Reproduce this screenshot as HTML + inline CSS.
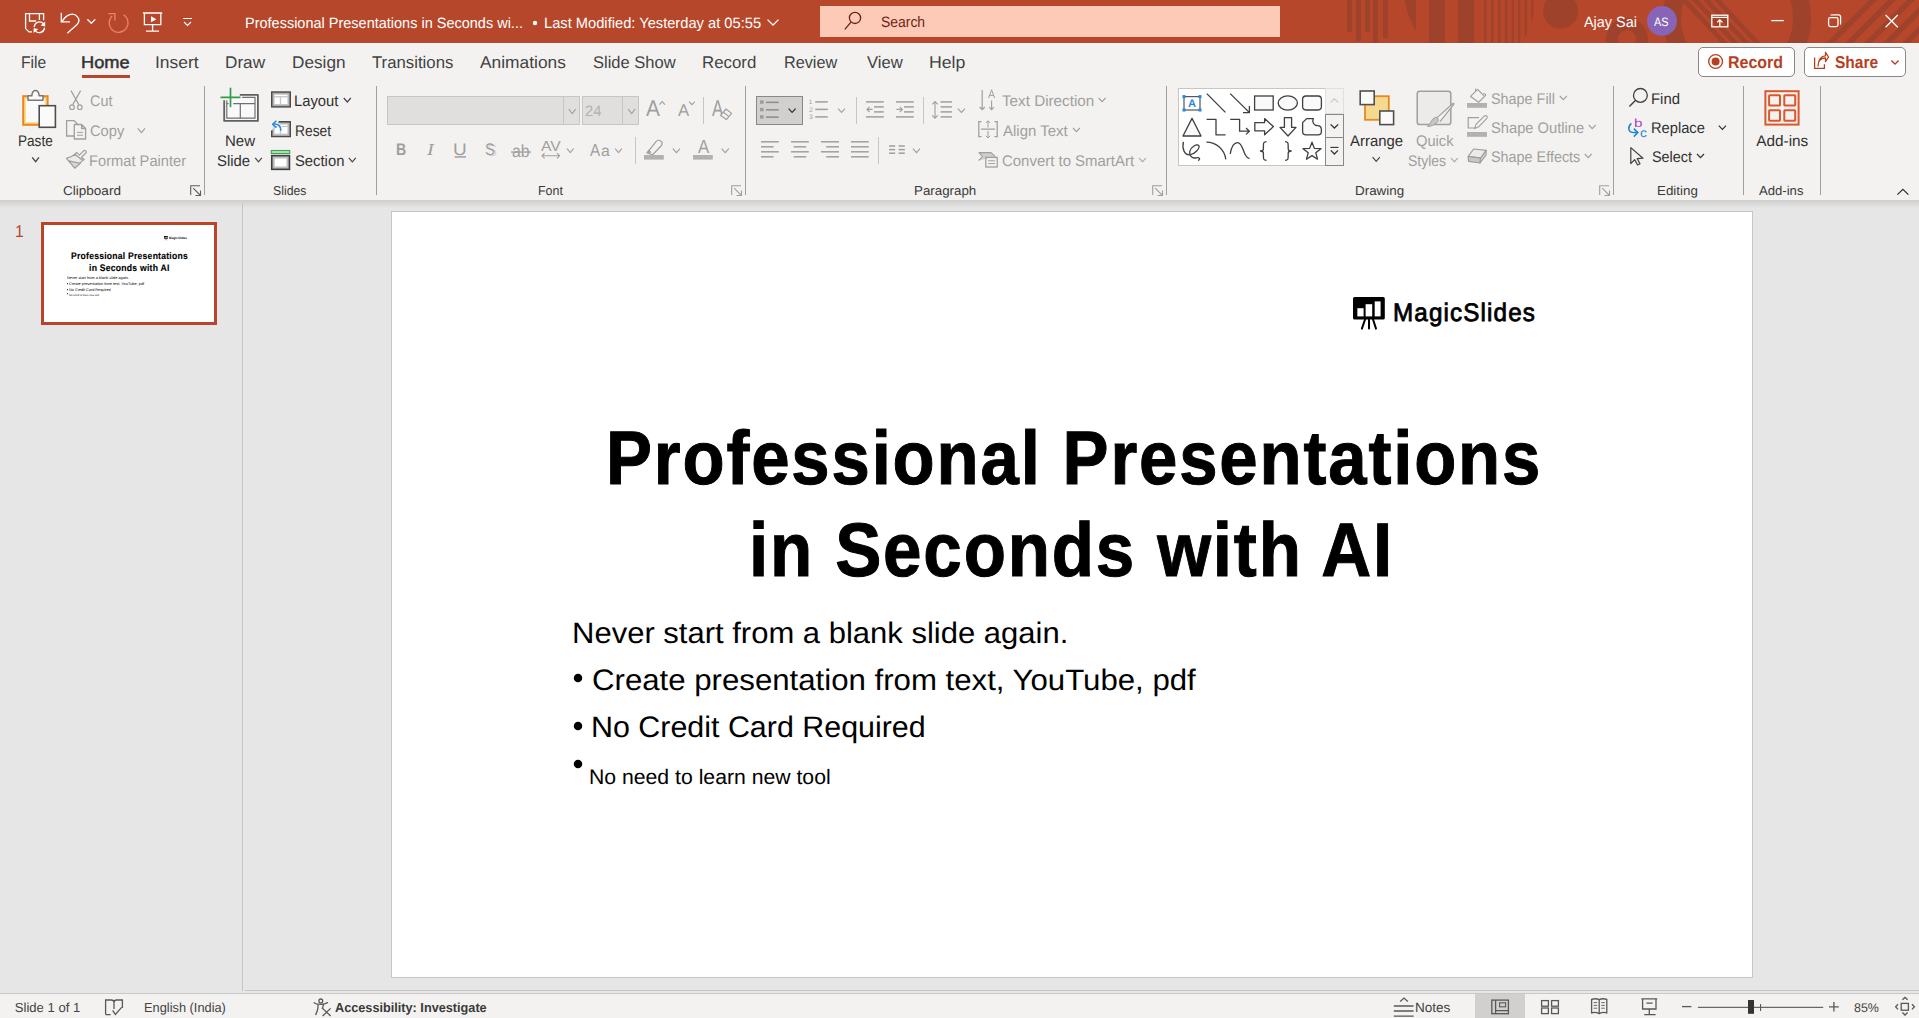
<!DOCTYPE html>
<html><head><meta charset="utf-8"><title>PowerPoint</title>
<style>
html,body{margin:0;padding:0;width:1919px;height:1018px;overflow:hidden;background:#E6E6E6;}
body{position:relative;font-family:"Liberation Sans",sans-serif;}
.r{position:absolute;box-sizing:border-box;}
.s{position:absolute;overflow:visible;}
.t{position:absolute;white-space:nowrap;line-height:1;transform-origin:0 0;text-rendering:geometricPrecision;font-family:"Liberation Sans",sans-serif;}
</style></head><body>
<div class="r" style="left:0px;top:0px;width:1919px;height:43px;background:#B7472A"></div>
<div class="r" style="left:0px;top:43px;width:1919px;height:1px;background:#F8F7F6"></div>
<div class="r" style="left:0px;top:44px;width:1919px;height:156px;background:#F3F2F1"></div>
<div class="r" style="left:0px;top:200px;width:1919px;height:794px;background:#E6E6E6"></div>
<div class="r" style="left:0px;top:200px;width:1919px;height:8px;background:linear-gradient(#CFCECD,#E6E6E6)"></div>
<div class="r" style="left:0px;top:994px;width:1919px;height:24px;background:#F3F2F1"></div>
<svg class="s" style="left:0px;top:0px;overflow:hidden" width="1919" height="43" viewBox="0 0 1919 43"><rect x="1347" y="0" width="5" height="32" fill="#9E422C"/><rect x="1356" y="0" width="5" height="41" fill="#9E422C"/><rect x="1365" y="0" width="5" height="32" fill="#9E422C"/><rect x="1373" y="0" width="5" height="43" fill="#9E422C"/><rect x="1383" y="0" width="5" height="38" fill="#9E422C"/><rect x="1429" y="0" width="16" height="43" fill="#9E422C"/><rect x="1458" y="0" width="16" height="43" fill="#9E422C"/><path d="M1405 0 H1416 V31 Q1407 16 1405 0 Z" fill="#9E422C"/><clipPath id="cp1"><circle cx="1470" cy="5" r="64"/></clipPath><g clip-path="url(#cp1)"><rect x="1484" y="0" width="2.5" height="43" fill="#9E422C"/><rect x="1491" y="0" width="2.5" height="43" fill="#9E422C"/><rect x="1498" y="0" width="2.5" height="43" fill="#9E422C"/><rect x="1505" y="0" width="2.5" height="43" fill="#9E422C"/><rect x="1511.5" y="0" width="2.5" height="43" fill="#9E422C"/><rect x="1518" y="0" width="2.5" height="43" fill="#9E422C"/><rect x="1524.5" y="0" width="2.5" height="43" fill="#9E422C"/><rect x="1531" y="0" width="2.5" height="43" fill="#9E422C"/></g><circle cx="1560.5" cy="11" r="17.5" fill="#9E422C"/><circle cx="1627" cy="39" r="15" fill="none" stroke="#9E422C" stroke-width="12"/><circle cx="1737" cy="18" r="65" fill="none" stroke="#9E422C" stroke-width="18"/><clipPath id="cp2"><circle cx="1737" cy="18" r="56"/></clipPath><g clip-path="url(#cp2)"><path d="M1681 0 L1687.5 0 L1727.5 43 L1721 43 Z" fill="#9E422C"/><path d="M1692 0 L1698.5 0 L1738.5 43 L1732 43 Z" fill="#9E422C"/><path d="M1703 0 L1709.5 0 L1749.5 43 L1743 43 Z" fill="#9E422C"/><path d="M1714 0 L1720.5 0 L1760.5 43 L1754 43 Z" fill="#9E422C"/></g><g><path d="M1826 43 L1834 43 L1877 0 L1869 0 Z" fill="#9E422C"/><path d="M1845 43 L1853 43 L1896 0 L1888 0 Z" fill="#9E422C"/><path d="M1864 43 L1872 43 L1915 0 L1907 0 Z" fill="#9E422C"/><path d="M1883 43 L1891 43 L1934 0 L1926 0 Z" fill="#9E422C"/><path d="M1902 43 L1910 43 L1953 0 L1945 0 Z" fill="#9E422C"/></g></svg>
<svg class="s" style="left:0px;top:0px;" width="200" height="43" viewBox="0 0 200 43"><path d="M31.4 31.9 H29 L25.6 28.6 V13.6 H43.6 V19.6" fill="none" stroke="#fff" stroke-width="1.3" stroke-linecap="square"/><path d="M29.5 13.6 V21 H35.5 M39.4 13.6 V19.4" fill="none" stroke="#fff" stroke-width="1.3" stroke-linecap="square"/><path d="M34.3 26.4 A5.2 5.2 0 0 1 43.6 23.9" fill="none" stroke="#fff" stroke-width="1.3" stroke-linecap="square"/><path d="M45.2 21.4 L45.2 26.4 L40.6 25.6 Z" fill="#fff"/><path d="M44.5 28.2 A5.2 5.2 0 0 1 35.2 30.6" fill="none" stroke="#fff" stroke-width="1.3" stroke-linecap="square"/><path d="M33.6 33 L33.6 28.2 L38.2 29 Z" fill="#fff"/><path d="M61.3 13.5 V21.9 H69.4" fill="none" stroke="#fff" stroke-width="1.3" stroke-linecap="square"/><path d="M62.3 21.2 C66 14.2 73.5 12 77.3 16.6 C79.6 19.4 79 22.5 76.8 24.8 L67.8 32.8" fill="none" stroke="#fff" stroke-width="1.3" stroke-linecap="square"/><path d="M87.8 19.8 L91.3 23.3 L94.8 19.8" fill="none" stroke="#fff" stroke-width="1.3" stroke-linecap="square"/><path d="M112.2 16 A9.4 9.4 0 1 0 123.4 14.8" fill="none" stroke="#E8806A" stroke-width="1.3"/><path d="M108.2 13.6 H114.9 V20.6" fill="none" stroke="#E8806A" stroke-width="1.4"/><path d="M143.6 13 H161.6 M144.4 13 V24.6 H160.8 V13 M152.6 24.6 V31 M146.6 31.2 H158.4" fill="none" stroke="#fff" stroke-width="1.3" stroke-linecap="square"/><path d="M151 16.2 L156.4 19.2 L151 22.2 Z" fill="#fff"/><path d="M183.2 18.5 H192 M184 22 L187.5 25.4 L191 22" fill="none" stroke="#fff" stroke-width="1.1"/></svg>
<span class="t" style="left:245.34px;top:16.80px;font-size:14.94px;color:#FFFFFF;transform:scaleX(0.9703);">Professional Presentations in Seconds wi...</span>
<svg class="s" style="left:530px;top:18px;" width="10" height="10" viewBox="0 0 10 10"><circle cx="5" cy="5" r="2.2" fill="#fff"/></svg>
<span class="t" style="left:543.72px;top:16.80px;font-size:14.94px;color:#FFFFFF;transform:scaleX(0.9826);">Last Modified: Yesterday at 05:55</span>
<svg class="s" style="left:760px;top:10px;" width="25" height="25" viewBox="0 0 25 25"><path d="M7.5 9.6 L13 15 L18.5 9.6" fill="none" stroke="#fff" stroke-width="1.3"/></svg>
<div class="r" style="left:820px;top:6px;width:460px;height:31px;background:#FCCAB6"></div>
<svg class="s" style="left:840px;top:8px;" width="30" height="30" viewBox="0 0 30 30"><circle cx="15" cy="9.9" r="5.6" fill="none" stroke="#6E1F14" stroke-width="1.3"/><path d="M11 14.2 L4.8 21.4" stroke="#6E1F14" stroke-width="1.3"/></svg>
<span class="t" style="left:880.95px;top:14.80px;font-size:15.08px;color:#6E1F14;transform:scaleX(0.9226);">Search</span>
<span class="t" style="left:1583.50px;top:15.80px;font-size:14.94px;color:#FFFFFF;transform:scaleX(0.9653);">Ajay Sai</span>
<svg class="s" style="left:1647px;top:6px;" width="30" height="30" viewBox="0 0 30 30"><circle cx="15" cy="15" r="15" fill="#8764B8"/></svg>
<span class="t" style="left:1654.20px;top:15.80px;font-size:12.23px;color:#FFFFFF;transform:scaleX(0.8947);">AS</span>
<svg class="s" style="left:1700px;top:0px;" width="219" height="43" viewBox="0 0 219 43"><rect x="11.8" y="15.2" width="16" height="11.6" fill="none" stroke="#fff" stroke-width="1.3"/><path d="M11.8 17.4 H27.8" stroke="#fff" stroke-width="1.2"/><path d="M19.8 26 V20 M17.2 22.4 L19.8 19.8 L22.4 22.4" fill="none" stroke="#fff" stroke-width="1.3"/><path d="M71.3 20.6 H83.8" stroke="#fff" stroke-width="1.3"/><rect x="128.6" y="17.6" width="9.4" height="9" rx="1.8" fill="none" stroke="#fff" stroke-width="1.3"/><path d="M130.8 15.6 V15.4 Q130.8 14.8 132.8 14.8 H138.6 Q140.6 14.8 140.6 16.8 V22.6 Q140.6 24.4 140 24.4" fill="none" stroke="#fff" stroke-width="1.3"/><path d="M185.6 15 L197.8 27.2 M197.8 15 L185.6 27.2" stroke="#fff" stroke-width="1.3"/></svg>
<span class="t" style="left:20.70px;top:55.10px;font-size:16.93px;color:#424242;transform:scaleX(0.9263);">File</span>
<span class="t" style="left:81.10px;top:55.10px;font-size:16.93px;color:#303030;transform:scaleX(1.0779);-webkit-text-stroke:0.45px #303030;">Home</span>
<span class="t" style="left:154.65px;top:55.10px;font-size:16.93px;color:#424242;transform:scaleX(1.0312);">Insert</span>
<span class="t" style="left:224.88px;top:55.10px;font-size:16.93px;color:#424242;transform:scaleX(1.0137);">Draw</span>
<span class="t" style="left:291.68px;top:55.10px;font-size:16.93px;color:#424242;transform:scaleX(1.0164);">Design</span>
<span class="t" style="left:371.70px;top:55.10px;font-size:16.93px;color:#424242;transform:scaleX(0.9903);">Transitions</span>
<span class="t" style="left:480.30px;top:55.10px;font-size:16.93px;color:#424242;transform:scaleX(1.0268);">Animations</span>
<span class="t" style="left:592.62px;top:55.10px;font-size:16.93px;color:#424242;transform:scaleX(0.9767);">Slide Show</span>
<span class="t" style="left:702.11px;top:55.10px;font-size:16.93px;color:#424242;transform:scaleX(0.9952);">Record</span>
<span class="t" style="left:783.95px;top:55.10px;font-size:16.93px;color:#424242;transform:scaleX(0.9581);">Review</span>
<span class="t" style="left:866.50px;top:55.10px;font-size:16.93px;color:#424242;transform:scaleX(0.9819);">View</span>
<span class="t" style="left:928.84px;top:55.10px;font-size:16.93px;color:#424242;transform:scaleX(1.0457);">Help</span>
<div class="r" style="left:82px;top:75px;width:48px;height:3px;background:#B7472A"></div>
<div class="r" style="left:1698px;top:47px;width:97px;height:30px;background:#fff;border:1px solid #8A8886;border-radius:5px"></div>
<div class="r" style="left:1804px;top:47px;width:102px;height:30px;background:#fff;border:1px solid #8A8886;border-radius:5px"></div>
<svg class="s" style="left:1700px;top:45px;" width="30" height="30" viewBox="0 0 30 30"><circle cx="15.6" cy="16.5" r="6.9" fill="none" stroke="#B5401F" stroke-width="1.4"/><circle cx="15.6" cy="16.5" r="4" fill="#B5401F"/></svg>
<span class="t" style="left:1727.77px;top:53.80px;font-size:17.07px;font-weight:bold;color:#B5401F;transform:scaleX(0.9368);">Record</span>
<svg class="s" style="left:1810px;top:45px;" width="30" height="30" viewBox="0 0 30 30"><path d="M4.6 12.6 V23.4 H14.4 V19.2" fill="none" stroke="#B5401F" stroke-width="1.3"/><path d="M8 21 C8 15.5 11.5 13 15.5 13 V16.6 L18.6 12 L15.5 7.4 V10.8 C11 10.8 8.6 14 8 21 Z" fill="none" stroke="#B5401F" stroke-width="1.3" stroke-linejoin="round"/></svg>
<span class="t" style="left:1834.84px;top:53.80px;font-size:17.07px;font-weight:bold;color:#B5401F;transform:scaleX(0.9088);">Share</span>
<svg class="s" style="left:1880px;top:45px;" width="30" height="30" viewBox="0 0 30 30"><path d="M11.3 15.5 L15 19 L18.7 15.5" fill="none" stroke="#B5401F" stroke-width="1.3"/></svg>
<div class="r" style="left:204px;top:86px;width:1px;height:109px;background:#A19F9D"></div>
<div class="r" style="left:376px;top:86px;width:1px;height:109px;background:#A19F9D"></div>
<div class="r" style="left:745px;top:86px;width:1px;height:109px;background:#A19F9D"></div>
<div class="r" style="left:1166px;top:86px;width:1px;height:109px;background:#A19F9D"></div>
<div class="r" style="left:1613px;top:86px;width:1px;height:109px;background:#A19F9D"></div>
<div class="r" style="left:1743px;top:86px;width:1px;height:109px;background:#A19F9D"></div>
<div class="r" style="left:1820px;top:86px;width:1px;height:109px;background:#A19F9D"></div>
<div class="r" style="left:703px;top:97px;width:1px;height:27px;background:#C8C6C4"></div>
<div class="r" style="left:635px;top:137px;width:1px;height:27px;background:#C8C6C4"></div>
<div class="r" style="left:856px;top:97px;width:1px;height:27px;background:#C8C6C4"></div>
<div class="r" style="left:923px;top:97px;width:1px;height:27px;background:#C8C6C4"></div>
<div class="r" style="left:878px;top:137px;width:1px;height:27px;background:#C8C6C4"></div>
<span class="t" style="left:62.87px;top:184.90px;font-size:12.94px;color:#3B3A39;transform:scaleX(1.0462);">Clipboard</span>
<span class="t" style="left:273.02px;top:184.90px;font-size:12.94px;color:#3B3A39;transform:scaleX(0.9511);">Slides</span>
<span class="t" style="left:537.94px;top:184.90px;font-size:12.94px;color:#3B3A39;transform:scaleX(0.9637);">Font</span>
<span class="t" style="left:914.17px;top:184.90px;font-size:12.94px;color:#3B3A39;transform:scaleX(1.0299);">Paragraph</span>
<span class="t" style="left:1355.16px;top:184.90px;font-size:12.94px;color:#3B3A39;transform:scaleX(1.0355);">Drawing</span>
<span class="t" style="left:1657.47px;top:184.90px;font-size:12.94px;color:#3B3A39;transform:scaleX(1.0323);">Editing</span>
<span class="t" style="left:1759.40px;top:184.90px;font-size:12.94px;color:#3B3A39;transform:scaleX(1.0134);">Add-ins</span>
<svg class="s" style="left:189.5px;top:184.5px;" width="12" height="12" viewBox="0 0 12 12"><path d="M0.7 10 V0.7 H10" fill="none" stroke="#605E5C" stroke-width="1.1"/><path d="M3.2 3.2 L10.5 10.5 M10.5 5.5 V10.5 H5.5" fill="none" stroke="#605E5C" stroke-width="1.1"/></svg>
<svg class="s" style="left:730.5px;top:184.5px;" width="12" height="12" viewBox="0 0 12 12"><path d="M0.7 10 V0.7 H10" fill="none" stroke="#A19F9D" stroke-width="1.1"/><path d="M3.2 3.2 L10.5 10.5 M10.5 5.5 V10.5 H5.5" fill="none" stroke="#A19F9D" stroke-width="1.1"/></svg>
<svg class="s" style="left:1151.5px;top:184.5px;" width="12" height="12" viewBox="0 0 12 12"><path d="M0.7 10 V0.7 H10" fill="none" stroke="#A19F9D" stroke-width="1.1"/><path d="M3.2 3.2 L10.5 10.5 M10.5 5.5 V10.5 H5.5" fill="none" stroke="#A19F9D" stroke-width="1.1"/></svg>
<svg class="s" style="left:1598.5px;top:184.5px;" width="12" height="12" viewBox="0 0 12 12"><path d="M0.7 10 V0.7 H10" fill="none" stroke="#A19F9D" stroke-width="1.1"/><path d="M3.2 3.2 L10.5 10.5 M10.5 5.5 V10.5 H5.5" fill="none" stroke="#A19F9D" stroke-width="1.1"/></svg>
<span class="t" style="left:18.34px;top:133.90px;font-size:15.36px;color:#323130;transform:scaleX(0.8842);">Paste</span>
<span class="t" style="left:89.54px;top:93.90px;font-size:15.36px;color:#A19F9D;transform:scaleX(0.9379);">Cut</span>
<span class="t" style="left:89.53px;top:123.50px;font-size:15.36px;color:#A19F9D;transform:scaleX(0.9551);">Copy</span>
<span class="t" style="left:89.05px;top:154.00px;font-size:15.36px;color:#A19F9D;transform:scaleX(0.9564);">Format Painter</span>
<span class="t" style="left:225.43px;top:133.60px;font-size:15.36px;color:#323130;transform:scaleX(0.9785);">New</span>
<span class="t" style="left:216.92px;top:153.90px;font-size:15.36px;color:#323130;transform:scaleX(0.9692);">Slide</span>
<span class="t" style="left:294.44px;top:93.90px;font-size:15.36px;color:#323130;transform:scaleX(0.9632);">Layout</span>
<span class="t" style="left:294.52px;top:123.60px;font-size:15.36px;color:#323130;transform:scaleX(0.9007);">Reset</span>
<span class="t" style="left:295.02px;top:153.90px;font-size:15.36px;color:#323130;transform:scaleX(0.9639);">Section</span>
<div class="r" style="left:387px;top:96px;width:193px;height:29px;background:#E1DFDD;border:1px solid #C8C6C4"></div>
<div class="r" style="left:563px;top:97px;width:1px;height:27px;background:#C8C6C4"></div>
<div class="r" style="left:582px;top:96px;width:57px;height:29px;background:#E1DFDD;border:1px solid #C8C6C4"></div>
<div class="r" style="left:622px;top:97px;width:1px;height:27px;background:#C8C6C4"></div>
<span class="t" style="left:584.51px;top:103.90px;font-size:15.08px;color:#B3B0AD;transform:scaleX(0.9818);">24</span>
<span class="t" style="left:646.00px;top:97.00px;font-size:22.76px;color:#A19F9D;transform:scaleX(0.9211);">A</span>
<span class="t" style="left:678.20px;top:102.00px;font-size:17.07px;color:#A19F9D;transform:scaleX(0.9825);">A</span>
<span class="t" style="left:712.00px;top:97.00px;font-size:22.76px;color:#A19F9D;transform:scaleX(0.7368);">A</span>
<span class="t" style="left:396.27px;top:141.60px;font-size:16.79px;font-weight:bold;color:#A19F9D;transform:scaleX(0.8447);">B</span>
<span class="t" style="left:427.12px;top:141.60px;font-size:16.79px;font-style:italic;font-family:'Liberation Serif',serif;color:#A19F9D;transform:scaleX(1.2188);">I</span>
<span class="t" style="left:453.44px;top:141.60px;font-size:16.79px;color:#A19F9D;transform:scaleX(1.1340);">U</span>
<span class="t" style="left:486.59px;top:143.00px;font-size:16.79px;color:#D6D4D2;transform:scaleX(0.8776);">S</span>
<span class="t" style="left:484.99px;top:141.60px;font-size:16.79px;color:#A19F9D;transform:scaleX(0.8776);">S</span>
<span class="t" style="left:512.37px;top:142.50px;font-size:17.64px;color:#A19F9D;transform:scaleX(0.9006);">ab</span>
<span class="t" style="left:541.20px;top:139.60px;font-size:14.51px;color:#A19F9D;transform:scaleX(1.0820);">AV</span>
<span class="t" style="left:589.60px;top:142.20px;font-size:17.35px;color:#A19F9D;transform:scaleX(0.8793);">A</span>
<span class="t" style="left:600.59px;top:144.20px;font-size:15.60px;color:#A19F9D;transform:scaleX(1.0123);">a</span>
<span class="t" style="left:697.60px;top:138.40px;font-size:19.06px;color:#A19F9D;transform:scaleX(0.8819);">A</span>
<svg class="s" style="left:0px;top:0px;" width="1919" height="200" viewBox="0 0 1919 200"><rect x="23.2" y="96.2" width="24.4" height="28.6" fill="#F9DD8E" stroke="#E8871E" stroke-width="2"/><rect x="26" y="99" width="18.8" height="23" fill="#FAFAFA"/><path d="M28 100.2 V95.8 H31.8 Q32.4 90.6 35.5 90.6 Q38.6 90.6 39.2 95.8 H43 V100.2 Z" fill="#FAFAFA" stroke="#787878" stroke-width="1.5" stroke-linejoin="round"/><rect x="39.2" y="105.7" width="16.2" height="21.6" fill="#FAFAFA" stroke="#4E4E4E" stroke-width="1.6"/><path d="M32.2 157.4 L35.6 161.6 L39 157.4" fill="none" stroke="#444" stroke-width="1.3"/><path d="M71 90.6 L78.8 104.6 M80.6 90.6 L72.8 104.6" stroke="#A19F9D" stroke-width="1.2" fill="none"/><circle cx="72" cy="107.2" r="2.3" fill="none" stroke="#A19F9D" stroke-width="1.2"/><circle cx="79.8" cy="107.2" r="2.3" fill="none" stroke="#A19F9D" stroke-width="1.2"/><path d="M74 136 H66.6 V120.6 H74 L77.5 124" fill="none" stroke="#A19F9D" stroke-width="1.3"/><path d="M74.3 124.5 H81.6 L85.6 128.5 V139 H74.3 Z M81.6 124.5 V128.5 H85.6" fill="none" stroke="#A19F9D" stroke-width="1.3" stroke-linejoin="round"/><path d="M77 132.4 H83 M77 135.2 H83" stroke="#A19F9D" stroke-width="1"/><path d="M137.8 128.4 L141.4 132.6 L145 128.4" fill="none" stroke="#A19F9D" stroke-width="1.2"/><path d="M66.4 158.4 Q71.4 157.4 74.9 154.2 L82.8 160.4 L74.8 168 Z" fill="#EDECEA" stroke="#A19F9D" stroke-width="1.2" stroke-linejoin="round"/><path d="M68.8 160.9 L80.4 163.4 L74.8 168 Z" fill="#D9D7D5" stroke="#A19F9D" stroke-width="1.1" stroke-linejoin="round"/><path d="M74.9 154.2 L76.6 152.4 L79.4 155.2 L83.6 150.8 Q84.8 149.8 85.8 150.8 Q86.8 151.8 85.8 153 L81.4 157.4 L84.2 159.4 L82.8 160.4 Z" fill="#F3F2F1" stroke="#A19F9D" stroke-width="1.2" stroke-linejoin="round"/><path d="M224.2 100.3 V120.9 H257.9 V94.8 H239.8" fill="#F7F7F7" stroke="#606060" stroke-width="1.8" stroke-linejoin="round"/><path d="M226.8 100.3 V118.2 H255 V97.4 H242.2" fill="#FAFAFA" stroke="#707070" stroke-width="1.2"/><path d="M233.2 103.6 H255 M226.8 103.6 H228.6 M240.3 103.6 V118.2" stroke="#707070" stroke-width="1.2"/><path d="M221.2 97.4 H239.8 M230.5 88.4 V106.5" stroke="#2E9E48" stroke-width="1.7" stroke-linecap="round"/><path d="M255.2 157.8 L258.5 161.8 L261.8 157.8" fill="none" stroke="#444" stroke-width="1.2"/><rect x="271.7" y="92" width="18.6" height="14.9" fill="#A9A9A9" stroke="#4A4A4A" stroke-width="1.4"/><rect x="273.4" y="93.7" width="15.2" height="11.5" fill="#C6C6C6"/><rect x="274.6" y="94.8" width="12.8" height="1.3" fill="#fff"/><rect x="274.6" y="97.4" width="5.2" height="6.6" fill="#fff"/><rect x="281.1" y="97.4" width="6.3" height="6.6" fill="#fff"/><path d="M343.8 98 L347.3 102 L350.8 98" fill="none" stroke="#444" stroke-width="1.2"/><path d="M278.6 121.7 H290.3 V136.6 H271.7 V130.4" fill="#A9A9A9" stroke="#4A4A4A" stroke-width="1.4"/><rect x="273.4" y="123.4" width="15.2" height="11.5" fill="#C6C6C6"/><rect x="274.6" y="127" width="5.2" height="6.6" fill="#fff"/><rect x="281.1" y="127" width="6.3" height="6.6" fill="#fff"/><rect x="280" y="124.6" width="7.4" height="1.3" fill="#fff"/><path d="M280.8 130.8 C281.2 126.2 278.6 123.8 273.4 124.1" fill="none" stroke="#F3F2F1" stroke-width="3.4"/><path d="M280.8 130.8 C281.2 126.2 278.6 123.8 273.4 124.1" fill="none" stroke="#1E88E5" stroke-width="1.5"/><path d="M276.4 120.8 L272.6 124.2 L276.4 127.8" fill="none" stroke="#1E88E5" stroke-width="1.5" stroke-linejoin="round"/><rect x="271.3" y="150.5" width="18.4" height="3" fill="#B5DDB8" stroke="#3FA34D" stroke-width="1.1"/><rect x="271.7" y="155.6" width="17.8" height="13.8" fill="#A9A9A9" stroke="#3E3E3E" stroke-width="1.5"/><rect x="273.4" y="157.3" width="14.4" height="10.4" fill="#C6C6C6"/><rect x="274.8" y="158.6" width="11.6" height="7.8" fill="#fff"/><path d="M348.8 157.8 L352.3 161.8 L355.8 157.8" fill="none" stroke="#444" stroke-width="1.2"/><path d="M568.8 109.2 L572.2 113.6 L575.6 109.2" fill="none" stroke="#A19F9D" stroke-width="1.1"/><path d="M628.2 109.2 L631.6 113.6 L635 109.2" fill="none" stroke="#A19F9D" stroke-width="1.1"/><path d="M659.4 104.6 L662.2 101.6 L665 104.6" fill="none" stroke="#A19F9D" stroke-width="1.1"/><path d="M689 101.6 L691.9 104.6 L694.8 101.6" fill="none" stroke="#A19F9D" stroke-width="1.1"/><path d="M720.6 115.4 L726 109 L731.6 113.4 L726.4 119.6 Z M723.4 112.2 L729 116.6" fill="#F3F2F1" stroke="#A19F9D" stroke-width="1.2" stroke-linejoin="round"/><rect x="454.6" y="156.2" width="11.4" height="1.5" fill="#A19F9D"/><rect x="511" y="151.4" width="20" height="1.3" fill="#A19F9D"/><path d="M542 155.8 H559.6 M544.6 153.2 L542 155.8 L544.6 158.4 M557 153.2 L559.6 155.8 L557 158.4" fill="none" stroke="#A19F9D" stroke-width="1.1"/><path d="M567 148.6 L570.3 152.6 L573.6 148.6" fill="none" stroke="#A19F9D" stroke-width="1.1"/><path d="M615.2 148.6 L618.5 152.6 L621.8 148.6" fill="none" stroke="#A19F9D" stroke-width="1.1"/><path d="M647.4 152.6 L656.2 141.4 C657.4 140 659.6 139.8 661 141.2 C662.4 142.6 662.2 144.6 661 146 L652.4 155 Z" fill="none" stroke="#A19F9D" stroke-width="1.2" stroke-linejoin="round"/><path d="M646 153.6 L648.6 149.6 L651.8 152.6 Z" fill="#A19F9D"/><rect x="644" y="155" width="19.8" height="4.6" fill="#B3B0AD"/><path d="M672.8 148.6 L676.4 152.6 L680 148.6" fill="none" stroke="#A19F9D" stroke-width="1.1"/><rect x="693" y="155" width="19.8" height="4.6" fill="#B3B0AD"/><path d="M721.6 148.6 L725.2 152.6 L728.8 148.6" fill="none" stroke="#A19F9D" stroke-width="1.1"/></svg>
<div class="r" style="left:756px;top:96px;width:47px;height:29px;background:#D1D0CF;border:1px solid #8A8886"></div>
<span class="t" style="left:808.80px;top:100.40px;font-size:6.54px;color:#A19F9D;">1</span>
<span class="t" style="left:808.67px;top:107.90px;font-size:6.54px;color:#A19F9D;transform:scaleX(1.0968);">2</span>
<span class="t" style="left:808.79px;top:115.40px;font-size:6.54px;color:#A19F9D;transform:scaleX(1.0625);">3</span>
<span class="t" style="left:1002.20px;top:93.90px;font-size:15.36px;color:#A19F9D;transform:scaleX(0.9912);">Text Direction</span>
<span class="t" style="left:1002.50px;top:123.60px;font-size:15.36px;color:#A19F9D;transform:scaleX(0.9770);">Align Text</span>
<span class="t" style="left:1001.82px;top:153.90px;font-size:15.36px;color:#A19F9D;transform:scaleX(0.9729);">Convert to SmartArt</span>
<div class="r" style="left:1178px;top:88px;width:166px;height:78px;background:#fff;border:1px solid #C8C6C4"></div>
<div class="r" style="left:1325px;top:88px;width:19px;height:26px;background:#F3F2F1;border:1px solid #E1DFDD"></div>
<div class="r" style="left:1325px;top:114px;width:19px;height:24px;background:#F3F2F1;border:1px solid #8A8886"></div>
<div class="r" style="left:1325px;top:137px;width:19px;height:29px;background:#F3F2F1;border:1px solid #8A8886"></div>
<span class="t" style="left:1188.10px;top:99.40px;font-size:11.10px;font-weight:bold;color:#1E88E5;">A</span>
<span class="t" style="left:1350.00px;top:133.60px;font-size:15.36px;color:#323130;transform:scaleX(0.9721);">Arrange</span>
<span class="t" style="left:1415.83px;top:133.60px;font-size:15.36px;color:#A19F9D;transform:scaleX(0.9565);">Quick</span>
<span class="t" style="left:1407.95px;top:153.90px;font-size:15.36px;color:#A19F9D;transform:scaleX(0.9104);">Styles</span>
<span class="t" style="left:1490.94px;top:91.80px;font-size:15.36px;color:#A19F9D;transform:scaleX(0.9371);">Shape Fill</span>
<span class="t" style="left:1490.93px;top:120.80px;font-size:15.36px;color:#A19F9D;transform:scaleX(0.9572);">Shape Outline</span>
<span class="t" style="left:1490.94px;top:149.80px;font-size:15.36px;color:#A19F9D;transform:scaleX(0.9366);">Shape Effects</span>
<span class="t" style="left:1651.34px;top:91.80px;font-size:15.36px;color:#323130;transform:scaleX(0.9698);">Find</span>
<span class="t" style="left:1634.09px;top:117.60px;font-size:11.80px;color:#A943BD;transform:scaleX(1.2963);">b</span>
<span class="t" style="left:1639.64px;top:127.00px;font-size:12.40px;color:#1A86D0;transform:scaleX(1.1111);">c</span>
<span class="t" style="left:1651.35px;top:120.80px;font-size:15.36px;color:#323130;transform:scaleX(0.9557);">Replace</span>
<span class="t" style="left:1651.94px;top:149.80px;font-size:15.36px;color:#323130;transform:scaleX(0.9375);">Select</span>
<span class="t" style="left:1756.20px;top:133.60px;font-size:15.36px;color:#323130;">Add-ins</span>
<svg class="s" style="left:0px;top:0px;" width="1919" height="200" viewBox="0 0 1919 200"><rect x="760" y="100.4" width="3.6" height="3.4" fill="#9E9C9A"/><rect x="766" y="101.60000000000001" width="12.8" height="1.5" fill="#8E8C8A"/><rect x="760" y="107.9" width="3.6" height="3.4" fill="#9E9C9A"/><rect x="766" y="109.10000000000001" width="12.8" height="1.5" fill="#8E8C8A"/><rect x="760" y="115.2" width="3.6" height="3.4" fill="#9E9C9A"/><rect x="766" y="116.4" width="12.8" height="1.5" fill="#8E8C8A"/><path d="M788.6 108.6 L792.1 112.4 L795.6 108.6" fill="none" stroke="#323130" stroke-width="1.3"/><rect x="815.2" y="101.15" width="12.6" height="1.5" fill="#A19F9D"/><rect x="815.2" y="108.65" width="12.6" height="1.5" fill="#A19F9D"/><rect x="815.2" y="116.15" width="12.6" height="1.5" fill="#A19F9D"/><path d="M838 108.6 L841.5 112.4 L845 108.6" fill="none" stroke="#A19F9D" stroke-width="1.1"/><rect x="866" y="101.15" width="17.8" height="1.5" fill="#A19F9D"/><rect x="874" y="106.15" width="9.8" height="1.5" fill="#A19F9D"/><rect x="874" y="111.15" width="9.8" height="1.5" fill="#A19F9D"/><rect x="866" y="116.15" width="17.8" height="1.5" fill="#A19F9D"/><path d="M872.6 109.4 H867 M869.6 106.8 L867 109.4 L869.6 112" fill="none" stroke="#A19F9D" stroke-width="1.1"/><rect x="896" y="101.15" width="17.8" height="1.5" fill="#A19F9D"/><rect x="904" y="106.15" width="9.8" height="1.5" fill="#A19F9D"/><rect x="904" y="111.15" width="9.8" height="1.5" fill="#A19F9D"/><rect x="896" y="116.15" width="17.8" height="1.5" fill="#A19F9D"/><path d="M896.4 109.4 H902.4 M899.8 106.8 L902.4 109.4 L899.8 112" fill="none" stroke="#A19F9D" stroke-width="1.1"/><rect x="940.6" y="101.15" width="11.3" height="1.5" fill="#A19F9D"/><rect x="940.6" y="106.15" width="11.3" height="1.5" fill="#A19F9D"/><rect x="940.6" y="111.15" width="11.3" height="1.5" fill="#A19F9D"/><rect x="940.6" y="116.15" width="11.3" height="1.5" fill="#A19F9D"/><path d="M935 101.6 V118.2 M932.2 104.4 L935 101.6 L937.8 104.4 M932.2 115.4 L935 118.2 L937.8 115.4" fill="none" stroke="#A19F9D" stroke-width="1.1"/><path d="M957.8 108.6 L961.4 112.4 L965 108.6" fill="none" stroke="#A19F9D" stroke-width="1.1"/><rect x="761" y="141.05" width="17.8" height="1.5" fill="#A19F9D"/><rect x="761" y="146.05" width="12.6" height="1.5" fill="#A19F9D"/><rect x="761" y="151.05" width="17.8" height="1.5" fill="#A19F9D"/><rect x="761" y="156.05" width="12.6" height="1.5" fill="#A19F9D"/><rect x="791" y="141.05" width="17.8" height="1.5" fill="#A19F9D"/><rect x="793.6" y="146.05" width="12.6" height="1.5" fill="#A19F9D"/><rect x="791" y="151.05" width="17.8" height="1.5" fill="#A19F9D"/><rect x="793.6" y="156.05" width="12.6" height="1.5" fill="#A19F9D"/><rect x="821" y="141.05" width="18" height="1.5" fill="#A19F9D"/><rect x="826.2" y="146.05" width="12.8" height="1.5" fill="#A19F9D"/><rect x="821" y="151.05" width="18" height="1.5" fill="#A19F9D"/><rect x="826.2" y="156.05" width="12.8" height="1.5" fill="#A19F9D"/><rect x="851" y="141.05" width="17.8" height="1.5" fill="#A19F9D"/><rect x="851" y="146.05" width="17.8" height="1.5" fill="#A19F9D"/><rect x="851" y="151.05" width="17.8" height="1.5" fill="#A19F9D"/><rect x="851" y="156.05" width="17.8" height="1.5" fill="#A19F9D"/><rect x="889" y="145.25" width="6.2" height="1.5" fill="#A19F9D"/><rect x="889" y="148.85" width="6.2" height="1.5" fill="#A19F9D"/><rect x="889" y="152.45" width="6.2" height="1.5" fill="#A19F9D"/><rect x="898.6" y="145.25" width="6.2" height="1.5" fill="#A19F9D"/><rect x="898.6" y="148.85" width="6.2" height="1.5" fill="#A19F9D"/><rect x="898.6" y="152.45" width="6.2" height="1.5" fill="#A19F9D"/><path d="M913 148.6 L916.5 152.6 L920 148.6" fill="none" stroke="#A19F9D" stroke-width="1.1"/><path d="M982.2 90 V109.6 M979.6 107 L982.2 109.6 L984.8 107" fill="none" stroke="#A19F9D" stroke-width="1.2"/><path d="M988.6 98 L991.6 89.8 L994.6 98 M989.6 95.4 H993.6" fill="none" stroke="#A19F9D" stroke-width="1"/><path d="M991.6 100.4 V109.6 M989.2 107.2 L991.6 109.6 L994 107.2" fill="none" stroke="#A19F9D" stroke-width="1.1"/><path d="M1098.6 98 L1102.1 101.6 L1105.6 98" fill="none" stroke="#A19F9D" stroke-width="1.1"/><path d="M981.6 121.6 H978.8 V136.6 H981.6 M994.4 121.6 H997.2 V136.6 H994.4 M981 129.2 H995" fill="none" stroke="#A19F9D" stroke-width="1.3"/><path d="M988 120.8 V127.6 M985.8 123 L988 120.8 L990.2 123 M988 130.8 V138 M985.8 135.8 L988 138 L990.2 135.8" fill="none" stroke="#A19F9D" stroke-width="1"/><path d="M1073 128 L1076.4 131.6 L1079.8 128" fill="none" stroke="#A19F9D" stroke-width="1.1"/><path d="M978.6 160.6 L982.4 156.6 L979 152.6 H991 L995.4 156.6" fill="#D0CECC" stroke="#A19F9D" stroke-width="1.1" stroke-linejoin="round"/><rect x="985.8" y="157.4" width="11.4" height="9.6" fill="#F3F2F1" stroke="#A19F9D" stroke-width="1.3"/><path d="M988.2 160.8 H995 M988.2 163.6 H995" stroke="#A19F9D" stroke-width="1"/><path d="M1139 158 L1142.5 161.8 L1146 158" fill="none" stroke="#A19F9D" stroke-width="1.1"/><path d="M1330.6 102.4 L1334.4 98.8 L1338.2 102.4" fill="none" stroke="#C8C6C4" stroke-width="1.1"/><path d="M1330.6 124.4 L1334.4 128 L1338.2 124.4" fill="none" stroke="#323130" stroke-width="1.3"/><path d="M1330.4 147.4 H1338.4" stroke="#323130" stroke-width="1.1"/><path d="M1330.8 150.4 L1334.4 154 L1338 150.4" fill="none" stroke="#323130" stroke-width="1.3"/><rect x="1184" y="96.6" width="16" height="13.4" fill="none" stroke="#555" stroke-width="1.2"/><rect x="1182.5" y="95.1" width="3" height="3" fill="#1E88E5"/><rect x="1198.5" y="95.1" width="3" height="3" fill="#1E88E5"/><rect x="1182.5" y="108.5" width="3" height="3" fill="#1E88E5"/><rect x="1198.5" y="108.5" width="3" height="3" fill="#1E88E5"/><path d="M1206.8 93.6 L1225.4 112.4" fill="none" stroke="#3F3F3F" stroke-width="1.3" stroke-linejoin="round"/><path d="M1230.2 93.6 L1249.2 112.4 M1249.4 106 V112.6 H1243" fill="none" stroke="#3F3F3F" stroke-width="1.3" stroke-linejoin="round"/><rect x="1254.6" y="96" width="18.6" height="14" fill="#FAFAFA" stroke="#3F3F3F" stroke-width="1.3"/><ellipse cx="1287.8" cy="103" rx="9.6" ry="7.2" fill="#FAFAFA" stroke="#3F3F3F" stroke-width="1.3"/><rect x="1302.6" y="96" width="18.8" height="14" rx="3.4" fill="#FAFAFA" stroke="#3F3F3F" stroke-width="1.3"/><path d="M1192 118.4 L1201 136 H1183 Z" fill="#FAFAFA" stroke="#3F3F3F" stroke-width="1.3" stroke-linejoin="round"/><path d="M1206.6 119.4 H1216 V134.8 H1225.6" fill="none" stroke="#3F3F3F" stroke-width="1.3" stroke-linejoin="round"/><path d="M1230.2 119.4 H1239.6 V131.2 H1249.2 M1246 128 L1249.4 131.2 L1246 134.4" fill="none" stroke="#3F3F3F" stroke-width="1.3" stroke-linejoin="round"/><path d="M1254.8 122.6 H1264.6 V118.6 L1273.4 126.6 L1264.6 134.8 V130.8 H1254.8 Z" fill="#FAFAFA" stroke="#3F3F3F" stroke-width="1.3" stroke-linejoin="round"/><path d="M1284.4 117.6 H1291.6 V127.4 H1296 L1288 136 L1280 127.4 H1284.4 Z" fill="#FAFAFA" stroke="#3F3F3F" stroke-width="1.3" stroke-linejoin="round"/><path d="M1306.6 118.6 H1313.4 C1311.8 121.6 1313.6 125.6 1317.6 125.6 C1320 125.6 1321.4 127.6 1321.4 130 V131.4 C1321.4 133.6 1320 134.8 1318 134.8 H1306 C1304 134.8 1302.6 133.6 1302.6 131.4 V122.6 Z" fill="#FAFAFA" stroke="#3F3F3F" stroke-width="1.3" stroke-linejoin="round"/><path d="M1183.4 141.8 C1181.8 149 1184.6 155.2 1189.6 154.8 C1194.8 154.4 1200.2 148 1198.8 145.6 C1197.4 143.2 1191.2 146.6 1189.8 151.4 C1188.8 155.4 1192 158.8 1196.2 157.8 C1199.2 157 1201 158.6 1198.2 160.6" fill="none" stroke="#3F3F3F" stroke-width="1.3" stroke-linejoin="round"/><path d="M1206.4 142.2 C1216 142.4 1224.6 149 1225.8 159.4" fill="none" stroke="#3F3F3F" stroke-width="1.3" stroke-linejoin="round"/><path d="M1230.2 154 C1231.4 146.6 1234.4 142.6 1237.6 142.6 C1241.8 142.6 1243 150.6 1245.4 155 C1246.6 157.2 1248 158.4 1249.6 158.6" fill="none" stroke="#3F3F3F" stroke-width="1.3" stroke-linejoin="round"/><path d="M1266.6 141.6 C1263.4 141.6 1263.4 143.2 1263.4 146.6 V148.8 C1263.4 150 1262.4 151 1260.4 151 C1262.4 151 1263.4 152 1263.4 153.2 V155.6 C1263.4 159 1263.4 160.4 1266.6 160.4" fill="none" stroke="#3F3F3F" stroke-width="1.3" stroke-linejoin="round"/><path d="M1285 141.6 C1288.2 141.6 1288.2 143.2 1288.2 146.6 V148.8 C1288.2 150 1289.2 151 1291.2 151 C1289.2 151 1288.2 152 1288.2 153.2 V155.6 C1288.2 159 1288.2 160.4 1285 160.4" fill="none" stroke="#3F3F3F" stroke-width="1.3" stroke-linejoin="round"/><path d="M1312.00 142.20 L1314.35 148.36 L1320.94 148.70 L1315.80 152.84 L1317.53 159.20 L1312.00 155.60 L1306.47 159.20 L1308.20 152.84 L1303.06 148.70 L1309.65 148.36 Z" fill="#FAFAFA" stroke="#3F3F3F" stroke-width="1.3" stroke-linejoin="round"/><rect x="1365" y="96.2" width="23.8" height="23.6" fill="#F7D88F" stroke="#E38A23" stroke-width="1.8"/><rect x="1360.2" y="91" width="14" height="13.6" fill="#FAFAFA" stroke="#505050" stroke-width="1.6"/><rect x="1379.8" y="111" width="13.8" height="13.6" fill="#FAFAFA" stroke="#505050" stroke-width="1.6"/><path d="M1372.6 157.2 L1376.1999999999998 161.4 L1379.8 157.2" fill="none" stroke="#444" stroke-width="1.2"/><rect x="1417.2" y="91.2" width="33.6" height="33.4" rx="2.6" fill="#EDEBE9" stroke="#A19F9D" stroke-width="1.5"/><path d="M1436 118.6 L1452.6 103.8 C1453.6 102.8 1454.4 103.4 1453.6 104.6 L1440 121.6" fill="#F3F2F1" stroke="#A19F9D" stroke-width="1.2"/><path d="M1427.4 126.4 C1431 126.6 1434 125 1437 122.6 C1439.6 120.2 1438 116.8 1435 117.6 C1431.6 118.6 1431 124 1427.4 126.4 Z" fill="#C8C6C4" stroke="#A19F9D" stroke-width="1"/><path d="M1451 158 L1454.4 161.8 L1457.8 158" fill="none" stroke="#A19F9D" stroke-width="1.1"/><path d="M1470.6 96.4 L1477.6 89.4 L1484.6 96.4 L1478.6 102.2 Z" fill="none" stroke="#A19F9D" stroke-width="1.2" stroke-linejoin="round"/><path d="M1475.6 91.4 V88.6 M1483.4 93.6 C1485 93 1485.6 94.4 1485.6 96" fill="none" stroke="#A19F9D" stroke-width="1.1"/><rect x="1467" y="103" width="20" height="4.8" fill="#B3B0AD"/><path d="M1559.8 96 L1563.3 99.6 L1566.8 96" fill="none" stroke="#A19F9D" stroke-width="1.1"/><path d="M1476.2 128 H1468.2 V117.6 H1479" fill="none" stroke="#A19F9D" stroke-width="1.2"/><path d="M1474.6 128.6 L1476 124.4 L1484.2 116.2 C1485 115.4 1486.2 115.6 1486.8 116.2 C1487.4 116.8 1487.4 117.8 1486.6 118.6 L1478.6 126.8 Z" fill="none" stroke="#A19F9D" stroke-width="1.1" stroke-linejoin="round"/><rect x="1467" y="132" width="20" height="4.8" fill="#B3B0AD"/><path d="M1588.8 125 L1592.1999999999998 128.6 L1595.6 125" fill="none" stroke="#A19F9D" stroke-width="1.1"/><path d="M1468.2 156.4 L1473.6 149 L1486.2 150.4 L1480.6 158.2 Z" fill="#EDEBE9" stroke="#A19F9D" stroke-width="1.2" stroke-linejoin="round"/><path d="M1468.2 156.4 L1480.6 158.2 L1480 163 L1468.6 161.4 Z" fill="#C8C6C4" stroke="#A19F9D" stroke-width="1.2" stroke-linejoin="round"/><path d="M1480.6 158.2 L1486.2 150.4 L1486 155.2 L1480 163 Z" fill="#D6D4D2" stroke="#A19F9D" stroke-width="1.2" stroke-linejoin="round"/><path d="M1584.8 154 L1588.1999999999998 157.6 L1591.6 154" fill="none" stroke="#A19F9D" stroke-width="1.1"/><circle cx="1640.4" cy="95.4" r="6.9" fill="none" stroke="#404040" stroke-width="1.3"/><path d="M1635.4 100.4 L1629.4 106.6" stroke="#404040" stroke-width="1.4"/><path d="M1631.4 123.4 C1627.6 126.4 1627.6 132.6 1634 132.6 H1637.6" fill="none" stroke="#1A86D0" stroke-width="1.5"/><path d="M1633.8 128.6 L1637.8 132.6 L1633.8 136.6" fill="none" stroke="#1A86D0" stroke-width="1.5"/><path d="M1718.8 125.6 L1722.4 129.4 L1726 125.6" fill="none" stroke="#323130" stroke-width="1.2"/><path d="M1630.8 147.6 V163.6 L1634.6 159.6 L1637.6 165 L1640 163.8 L1637.2 158.6 L1643 158.2 Z" fill="none" stroke="#404040" stroke-width="1.2" stroke-linejoin="round"/><path d="M1697 154 L1700.5 157.6 L1704 154" fill="none" stroke="#323130" stroke-width="1.2"/><rect x="1765.4" y="91.2" width="33.2" height="33.4" fill="none" stroke="#DA582C" stroke-width="2"/><rect x="1769.1" y="95.2" width="10.9" height="10.4" rx="0.6" fill="none" stroke="#DA582C" stroke-width="2"/><rect x="1784.3" y="95.2" width="10.9" height="10.4" rx="0.6" fill="none" stroke="#DA582C" stroke-width="2"/><rect x="1769.1" y="110.3" width="10.9" height="10.4" rx="0.6" fill="none" stroke="#DA582C" stroke-width="2"/><rect x="1784.3" y="110.3" width="10.9" height="10.4" rx="0.6" fill="none" stroke="#DA582C" stroke-width="2"/><path d="M1897.4 194.6 L1902.9 189.4 L1908.4 194.6" fill="none" stroke="#323130" stroke-width="1.3"/></svg>
<div class="r" style="left:242px;top:203px;width:1px;height:788px;background:#C6C6C6"></div>
<div class="r" style="left:245px;top:990px;width:1674px;height:1px;background:#C6C6C6"></div>
<div class="r" style="left:0px;top:993px;width:1919px;height:1px;background:#C8C8C8"></div>
<div class="r" style="left:41px;top:222px;width:176px;height:103px;background:#fff;border:3px solid #B8452A"></div>
<span class="t" style="left:15.41px;top:222.90px;font-size:17.07px;color:#B8452A;transform:scaleX(0.9189);">1</span>
<div class="r" style="left:391px;top:211px;width:1362px;height:767px;background:#fff;border:1px solid #C6C6C6"></div>
<svg class="s" style="left:1352.50px;top:296.90px" width="32.00" height="33.00" viewBox="0 0 32 33"><rect x="0" y="0" width="31.8" height="22.5" rx="1.6" fill="#000"/><rect x="4.35" y="11.2" width="6.25" height="8.2" fill="#fff"/><rect x="12.6" y="7.2" width="6.6" height="12.2" fill="#fff"/><rect x="21.7" y="4.4" width="5.9" height="15" fill="#fff"/><path d="M12.2 22 L8.9 31.6 M16 22 V31.6 M19.9 22 L23 31.6" stroke="#000" stroke-width="2" stroke-linecap="round"/></svg>
<span class="t" style="left:1393.39px;top:301.20px;font-size:25.32px;color:#000;transform:scaleX(0.9558);letter-spacing:1.20px;-webkit-text-stroke:0.80px #000;">MagicSlides</span>
<span class="t" style="left:605.69px;top:420.80px;font-size:75.82px;font-weight:bold;color:#000;transform:scaleX(0.9094);letter-spacing:2.00px;-webkit-text-stroke:1.00px #000;">Professional Presentations</span>
<span class="t" style="left:748.68px;top:513.30px;font-size:76.10px;font-weight:bold;color:#000;transform:scaleX(0.9089);letter-spacing:2.00px;-webkit-text-stroke:1.00px #000;">in Seconds with AI</span>
<span class="t" style="left:572.38px;top:618.90px;font-size:29.59px;color:#000;transform:scaleX(1.0482);">Never start from a blank slide again.</span>
<svg class="s" style="left:573.30px;top:672.90px" width="10.00" height="10.00" viewBox="0 0 10 10"><circle cx="5" cy="5" r="4.25" fill="#000"/></svg>
<span class="t" style="left:591.64px;top:665.70px;font-size:29.59px;color:#000;transform:scaleX(1.0542);">Create presentation from text, YouTube, pdf</span>
<svg class="s" style="left:573.30px;top:720.50px" width="10.00" height="10.00" viewBox="0 0 10 10"><circle cx="5" cy="5" r="4.25" fill="#000"/></svg>
<span class="t" style="left:591.22px;top:712.90px;font-size:29.59px;color:#000;transform:scaleX(1.0282);">No Credit Card Required</span>
<svg class="s" style="left:573.30px;top:758.90px" width="10.00" height="10.00" viewBox="0 0 10 10"><circle cx="5" cy="5" r="4.25" fill="#000"/></svg>
<span class="t" style="left:589.28px;top:767.80px;font-size:20.91px;color:#000;transform:scaleX(1.0142);">No need to learn new tool</span>
<span class="t" style="left:14.80px;top:1001.20px;font-size:13.09px;color:#444341;">Slide 1 of 1</span>
<span class="t" style="left:144.42px;top:1001.20px;font-size:13.09px;color:#444341;transform:scaleX(0.9794);">English (India)</span>
<span class="t" style="left:335.11px;top:1000.90px;font-size:13.09px;font-weight:bold;color:#3B3A39;transform:scaleX(0.9705);">Accessibility: Investigate</span>
<span class="t" style="left:1415.29px;top:1001.00px;font-size:13.37px;color:#444341;transform:scaleX(1.0136);">Notes</span>
<span class="t" style="left:1853.90px;top:1001.80px;font-size:12.52px;color:#444341;transform:scaleX(0.9950);">85%</span>
<div class="r" style="left:1475px;top:994px;width:50px;height:24px;background:#D2D0CE"></div>
<svg class="s" style="left:0px;top:0px;" width="1919" height="1018" viewBox="0 0 1919 1018"><path d="M105.6 1014.6 V1000 H111.4 C113 1000 114 1001 114 1002.6 V1009 M114 1002.6 C114 1001 115 1000 116.6 1000 H122.4 V1008" fill="none" stroke="#5A5856" stroke-width="1.3"/><path d="M105.6 1014.6 H110.6 M112.6 1010.4 L115.4 1014.4 L121.6 1007.4" fill="none" stroke="#5A5856" stroke-width="1.3"/><circle cx="320.8" cy="1000.9" r="1.9" fill="none" stroke="#5A5856" stroke-width="1.3"/><path d="M313.6 1002.4 C315.8 1004.2 318 1004.4 320.8 1004.4 C323.4 1004.4 325.6 1004 328 1002.4 M317.8 1004.4 C318.8 1007.4 317.4 1011 315.6 1015 M323.6 1004.4 C323.2 1006.4 323 1007.6 322 1009" fill="none" stroke="#5A5856" stroke-width="1.3"/><path d="M322.6 1008.4 L330.6 1016 M330.6 1008.4 L322.6 1016" fill="none" stroke="#5A5856" stroke-width="1.3"/><path d="M1400.2 1001.4 L1404 998 L1407.8 1001.4" fill="none" stroke="#5A5856" stroke-width="1.3"/><path d="M1393.8 1006 H1413.6 M1393.8 1011 H1413.6 M1393.8 1016.2 H1413.6" fill="none" stroke="#5A5856" stroke-width="1.3"/><rect x="1491.8" y="1000.1" width="16.6" height="13.6" fill="none" stroke="#5A5856" stroke-width="1.3"/><path d="M1495.6 1000.1 V1013.7 M1495.6 1010.6 H1508.4" fill="none" stroke="#5A5856" stroke-width="1.3"/><rect x="1499.6" y="1002.8" width="6" height="4" fill="none" stroke="#5A5856" stroke-width="1.1"/><rect x="1541.6" y="1000.6" width="6.8" height="5.6" fill="none" stroke="#5A5856" stroke-width="1.3"/><rect x="1551.6" y="1000.6" width="6.8" height="5.6" fill="none" stroke="#5A5856" stroke-width="1.3"/><rect x="1541.6" y="1008" width="6.8" height="5.6" fill="none" stroke="#5A5856" stroke-width="1.3"/><rect x="1551.6" y="1008" width="6.8" height="5.6" fill="none" stroke="#5A5856" stroke-width="1.3"/><path d="M1599.2 1013.6 V999.6 C1597 998.6 1594 998.6 1591.6 999.4 V1012.8 C1594 1012 1597 1012.4 1599.2 1013.6 C1601.4 1012.4 1604.4 1012 1606.8 1012.8 V999.4 C1604.4 998.6 1601.4 998.6 1599.2 999.6" fill="none" stroke="#5A5856" stroke-width="1.3"/><path d="M1593.6 1002.6 H1597.2 M1593.6 1005.4 H1597.2 M1593.6 1008.2 H1597.2 M1601.2 1002.6 H1604.8 M1601.2 1005.4 H1604.8 M1601.2 1008.2 H1604.8" fill="none" stroke="#5A5856" stroke-width="0.9"/><path d="M1641.4 998.8 H1657.2 M1642.6 998.8 V1009 H1656 V998.8 M1649.3 1009 V1014.6 M1644.2 1014.6 H1655.6 M1646.4 1003.2 H1652.6" fill="none" stroke="#5A5856" stroke-width="1.3"/><path d="M1682 1006.6 H1691.4" fill="none" stroke="#5A5856" stroke-width="1.3"/><rect x="1697.9" y="1006.8" width="125.3" height="1.1" fill="#5A5856"/><rect x="1760" y="1004" width="1.1" height="7" fill="#5A5856"/><rect x="1748" y="1000" width="6" height="13.8" fill="#333"/><path d="M1829 1006.8 H1838.8 M1833.9 1002 V1011.6" fill="none" stroke="#5A5856" stroke-width="1.3"/><rect x="1901.2" y="1003.4" width="7.2" height="6.8" fill="none" stroke="#5A5856" stroke-width="1.3"/><path d="M1902.4 999.8 L1905 997.4 L1907.6 999.8 M1902.4 1012.6 L1905 1015 L1907.6 1012.6 M1898 1004.2 L1895.6 1006.8 L1898 1009.4 M1912 1004.2 L1914.4 1006.8 L1912 1009.4" fill="none" stroke="#5A5856" stroke-width="1.3"/></svg>
<svg class="s" style="left:164.06px;top:235.61px" width="4.00" height="4.12" viewBox="0 0 32 33"><rect x="0" y="0" width="31.8" height="22.5" rx="1.6" fill="#000"/><rect x="4.35" y="11.2" width="6.25" height="8.2" fill="#fff"/><rect x="12.6" y="7.2" width="6.6" height="12.2" fill="#fff"/><rect x="21.7" y="4.4" width="5.9" height="15" fill="#fff"/><path d="M12.2 22 L8.9 31.6 M16 22 V31.6 M19.9 22 L23 31.6" stroke="#000" stroke-width="2" stroke-linecap="round"/></svg>
<span class="t" style="left:169.22px;top:236.65px;font-size:3.17px;color:#000;transform:scaleX(0.9521);letter-spacing:0.15px;-webkit-text-stroke:0.10px #000;">MagicSlides</span>
<span class="t" style="left:70.70px;top:251.98px;font-size:9.48px;font-weight:bold;color:#000;transform:scaleX(0.9094);letter-spacing:0.25px;-webkit-text-stroke:0.12px #000;">Professional Presentations</span>
<span class="t" style="left:88.58px;top:263.54px;font-size:9.51px;font-weight:bold;color:#000;transform:scaleX(0.9089);letter-spacing:0.25px;-webkit-text-stroke:0.12px #000;">in Seconds with AI</span>
<span class="t" style="left:66.54px;top:276.86px;font-size:3.70px;color:#000;transform:scaleX(1.0487);">Never start from a blank slide again.</span>
<svg class="s" style="left:66.66px;top:282.61px" width="1.25" height="1.25" viewBox="0 0 10 10"><circle cx="5" cy="5" r="4.25" fill="#000"/></svg>
<span class="t" style="left:69.03px;top:282.71px;font-size:3.70px;color:#000;transform:scaleX(1.0527);">Create presentation from text, YouTube, pdf</span>
<svg class="s" style="left:66.66px;top:288.56px" width="1.25" height="1.25" viewBox="0 0 10 10"><circle cx="5" cy="5" r="4.25" fill="#000"/></svg>
<span class="t" style="left:68.89px;top:288.61px;font-size:3.70px;color:#000;transform:scaleX(1.0276);">No Credit Card Required</span>
<svg class="s" style="left:66.66px;top:293.36px" width="1.25" height="1.25" viewBox="0 0 10 10"><circle cx="5" cy="5" r="4.25" fill="#000"/></svg>
<span class="t" style="left:68.67px;top:295.48px;font-size:2.61px;color:#000;transform:scaleX(1.0113);">No need to learn new tool</span>
</body></html>
